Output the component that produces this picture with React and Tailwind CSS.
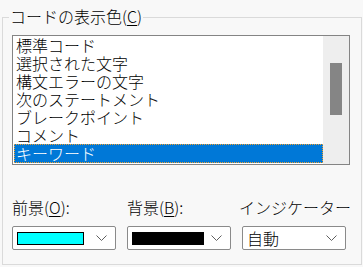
import React from "react";

const items = ["標準コード", "選択された文字", "構文エラーの文字", "次のステートメント", "ブレークポイント", "コメント", "キーワード"];

function Chevron() {
  return (
    <svg width="11" height="6" viewBox="0 0 11 6" className="shrink-0">
      <path d="M0.5 0.5 L5.5 5.5 L10.5 0.5" fill="none" stroke="#5f5f5f" strokeWidth="1" />
    </svg>
  );
}

function ComboBox({ children }) {
  return (
    <div className="flex h-[24px] w-[104px] items-center rounded-[2px] border border-[#8a8a8a] bg-white pl-[4px] pr-[8px]">
      <div className="flex flex-1 items-center">{children}</div>
      <Chevron />
    </div>
  );
}

export default function App() {
  return (
    <div
      className="relative h-[267px] w-[363px] bg-[#f8f8f8] font-light text-black"
      style={{ fontFamily: '"Noto Sans CJK JP", "Noto Sans", sans-serif' }}
    >
      <div className="h-[17px]" />
      {/* group box */}
      <div className="relative ml-[2px] h-[248px] w-[360px] border border-[#dadada]">
        <div className="absolute left-[6px] top-[-12px] bg-[#f8f8f8] px-[1px] text-[16px] leading-[20px]">
          コードの表示色(<span className="underline underline-offset-2">C</span>)
        </div>

        {/* list box */}
        <div className="ml-[9px] mt-[17px] flex h-[130px] w-[338px] border border-[#848484] bg-white">
          <div className="flex-1 pl-[1px]">
            {items.map((t, i) => (
              <div
                key={t}
                className={
                  i === items.length - 1
                    ? "h-[19px] border border-dotted border-[#f0a030] bg-[#0078d7] pl-[1px] text-[16px] leading-[17px] text-white"
                    : "h-[18px] pl-[2px] text-[16px] leading-[18px]"
                }
              >
                {t}
              </div>
            ))}
          </div>
          <div className="w-[26px] bg-[#eeeeee] pl-[7px] pt-[27px]">
            <div className="h-[52px] w-[12px] bg-[#858585]" />
          </div>
        </div>

        {/* color selectors */}
        <div className="ml-[9px] mt-[32px] flex gap-[11px]">
          <div className="flex flex-col">
            <div className="h-[29px] text-[16px] leading-[20px]">
              前景(<span className="underline underline-offset-2">O</span>):
            </div>
            <ComboBox>
              <div className="h-[13px] w-[67px] border border-black bg-[#00ffff]" />
            </ComboBox>
          </div>
          <div className="flex flex-col">
            <div className="h-[29px] text-[16px] leading-[20px]">
              背景(<span className="underline underline-offset-2">B</span>):
            </div>
            <ComboBox>
              <div className="h-[13px] w-[72px] border border-black bg-black" />
            </ComboBox>
          </div>
          <div className="flex flex-col">
            <div className="-ml-[3px] h-[29px] text-[16px] leading-[20px]">インジケーター</div>
            <ComboBox>
              <div className="text-[16px] leading-[20px]">自動</div>
            </ComboBox>
          </div>
        </div>
      </div>
    </div>
  );
}
